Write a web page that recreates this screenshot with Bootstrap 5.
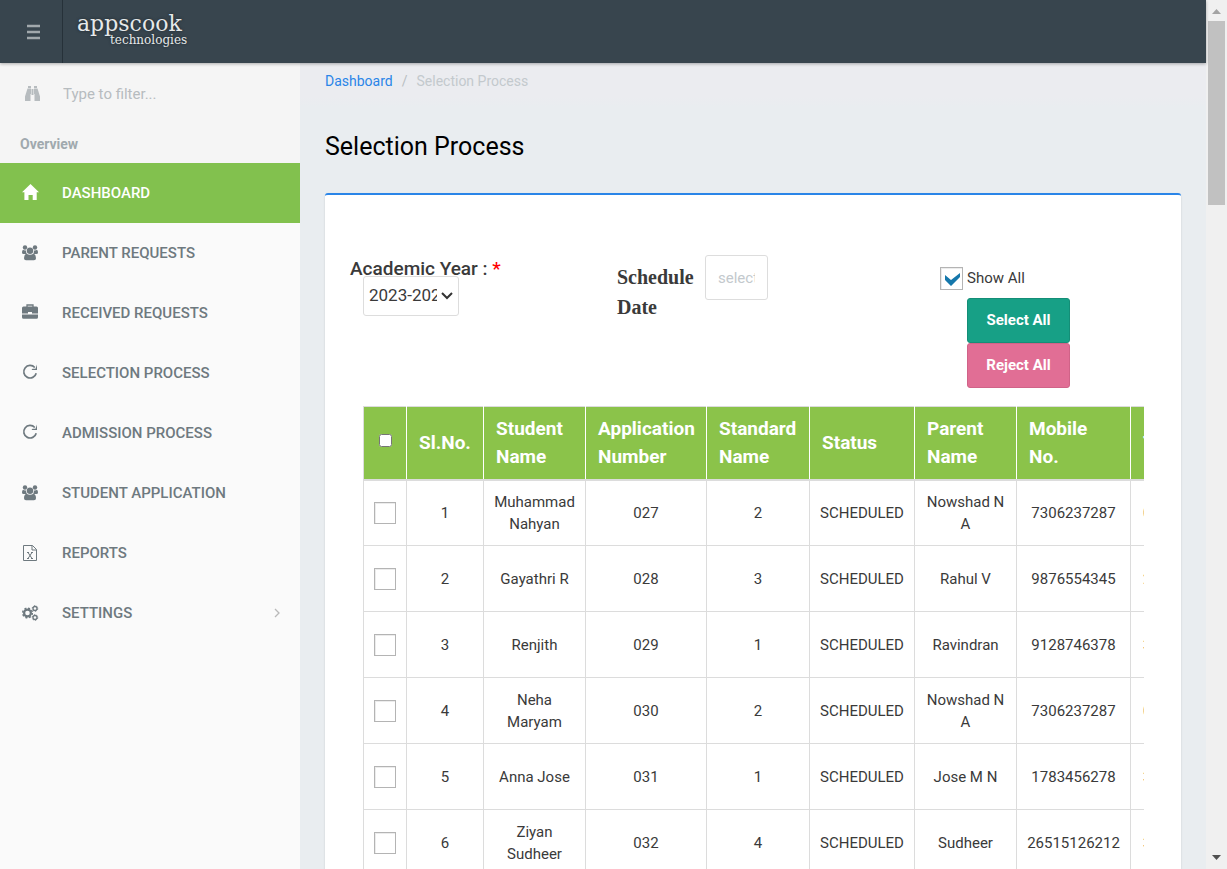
<!DOCTYPE html>
<html lang="en">
<head>
<meta charset="utf-8">
<meta name="viewport" content="width=device-width, initial-scale=1">
<title>Selection Process</title>
<link href="https://cdn.jsdelivr.net/npm/bootstrap@5.3.0/dist/css/bootstrap.min.css" rel="stylesheet">
<style>
body{font-family:Roboto,"Liberation Sans",sans-serif;font-size:15px;color:#3a3a3a;background:#e9edf0}
.topbar{height:63px;background:#38454e;box-shadow:0 1px 3px rgba(0,0,0,.3);z-index:2}
.toggle{width:63px;border:0;border-right:1px solid #263139;background:none;color:#a1a8ac}
.logo{margin-left:14px;padding-top:13px;color:#e6e9ea;font-family:"DejaVu Serif",serif;text-shadow:0 0 3px #1c252b}
.logo-main{font-size:22px;line-height:21px}
.logo-sub{font-size:12px;line-height:12px;padding-left:33px}
.side{width:300px;background:#fafafa}
.side-top{height:100px;background:#f5f5f5}
.filter-row{height:62px;padding-left:20px;color:#b7bcbf}
.filter-row input{border:0;background:none;font-size:15px;padding:0;width:200px;margin-left:19px;color:#777;outline:0}
.filter-row input::placeholder{color:#b7bcbf;opacity:1}
.overview{padding-left:20px;font-size:14px;line-height:20px;font-weight:700;color:#a0a9ae;margin-top:9px}
.side-link{height:60px;padding:0 20px;color:#6e797f;font-weight:500;text-decoration:none}
.side-link svg{width:20px;height:20px;margin-right:22px}
.side-link .chev{width:14px;height:14px;margin:0 -4px 0 auto;color:#b9b9b9}
.side-link.current{background:#82c14e;color:#fff}
.content-area{background:linear-gradient(#ebecf0 0,#ebecf0 34px,#e9edf0 44px);padding:8px 25px 0}
.crumbs{font-size:14px;line-height:20px;--bs-breadcrumb-divider-color:#b9bec2;--bs-breadcrumb-item-padding-x:9px;margin-bottom:41px}
.crumbs a{color:#2a85e8;text-decoration:none}
.crumbs .active{color:#c3c9cd}
.page-title{font-size:25px;line-height:30px;font-weight:400;color:#000;margin-bottom:31px}
.panel{background:#fff;border-top:2px solid #2a85e8;border-radius:3px;box-shadow:0 1px 2px rgba(0,0,0,.15);padding:60px 25px 25px}
.tools{display:grid;grid-template-columns:267fr 323fr 216fr}
.year-label{font-size:19px;line-height:18px;font-weight:500;display:block;margin-top:5px}
.year-select{appearance:none;width:96px;height:40px;margin-left:13px;margin-top:-2px;border:1px solid #ddd;border-radius:3px;font-size:17px;padding:0 21px 0 5px;color:#3a3a3a;display:block;background:#fff url("data:image/svg+xml,%3Csvg xmlns='http://www.w3.org/2000/svg' viewBox='0 0 12 8'%3E%3Cpath d='M1 1l5 5 5-5' fill='none' stroke='%23333' stroke-width='2'/%3E%3C/svg%3E") no-repeat right 5px center/12px 8px}
.date-label{font-family:"Liberation Serif",serif;font-weight:700;font-size:20px;line-height:30px;width:88px;padding-top:7px}
.date-input{width:63px;height:45px;border:1px solid #ddd;border-radius:3px;padding:0 12px}
.date-input::placeholder{color:#c3c9cd;opacity:1}
.tick{appearance:none;width:22px;height:22px;margin:0;border:1px solid #b4b4b4;background:#fff;box-shadow:inset 1px 1px 0 #ececec;display:block;flex:none}
.tick:checked{width:23px;height:23px;background:#fff url("data:image/svg+xml,%3Csvg xmlns='http://www.w3.org/2000/svg' viewBox='0 0 20 20'%3E%3Cpath d='M3 6v5l6 6 9-9V4l-9 7z' fill='%231577ab'/%3E%3C/svg%3E") center/20px}
.act{width:103px;height:45px;border-radius:3px;font-size:15px;font-weight:700;color:#fff;padding:0;display:block;margin-left:27px}
.act-ok{background:#17a086;border-color:#148e77}
.act-no{background:#e16e95;border-color:#d06388}
.show-all{height:43px}
.table-wrap{margin:18px 12px 0 13px;overflow:hidden}
.requests{table-layout:fixed;width:900px;margin:0;border-collapse:collapse;color:#3a3a3a;text-align:center}
.requests th,.requests td{border:1px solid #dcdcdc;vertical-align:middle}
.requests td{height:66px;padding:0 8px;line-height:22px}
.requests th{height:73px;background:#8bc34a;color:#fff;font-size:19px;line-height:28px;font-weight:700;text-align:left;padding:0 12px;border-bottom:2px solid #dcdcdc;border-left-color:#fff;border-right-color:#fff}
.requests th:nth-child(4),.requests th:nth-child(5),.requests th:nth-child(2){padding-right:0}
.requests th:first-child{padding:0;border-left-color:#dcdcdc}
.requests th:first-child input{margin:0 auto 4px}
.requests th:nth-child(8){padding-right:24px}
.requests td:last-child{text-align:left;padding-left:12px}
.requests .tick{margin:auto}
.w-a{width:43px}.w-b{width:77px}.w-c{width:102px}.w-d{width:121px}.w-e{width:103px}.w-f{width:105px}.w-g{width:114px}
.scroll-rail{width:21px;background:#f0f0f0;flex:none}
.scroll-rail i{display:block;width:17px;height:184px;background:#c1c1c1}
</style>
</head>
<body class="d-flex vh-100 overflow-hidden">
<svg width="0" height="0" class="d-none" aria-hidden="true">
<symbol id="users" viewBox="0 0 20 20"><g fill="currentColor"><circle cx="5" cy="4.500" r="2.200"/><circle cx="15" cy="4.500" r="2.200"/><circle cx="10" cy="7.800" r="3.200"/><path d="M2 9.500q0-3 1.300-2.500 1.700.8 2.800.3-.3 2.200.9 3.700H3.500Q2 11 2 9.500zM18 9.500q0-3-1.300-2.500-1.700.8-2.800.3.3 2.200-.9 3.700h3.500q1.500 0 1.500-1.500zM6.500 10.800q3.500 2 7 0 2.500.7 2.500 4.400 0 2-2 2H6q-2 0-2-2 0-3.700 2.500-4.400z"/></g></symbol>
<symbol id="redo" viewBox="0 0 20 20"><path d="M14.800 4.500A6.300 6.300 0 1 0 16.200 10.200" fill="none" stroke="currentColor" stroke-width="1.700"/><path d="M17 1.500V7h-5.500l1-1.200h3z" fill="currentColor"/></symbol>
</svg>
<div class="d-flex flex-column flex-grow-1" style="min-width:0">
<header class="topbar d-flex position-relative flex-shrink-0">
<button class="toggle d-flex align-items-center justify-content-center py-0 pe-0 ps-1" type="button" aria-label="Toggle menu"><svg width="13" height="16" viewBox="0 0 13 16"><path d="M0 2h13M0 8h13M0 14h13" stroke="currentColor" stroke-width="2.500"/></svg></button>
<div class="logo"><div class="logo-main">appscook</div><div class="logo-sub">technologies</div></div>
</header>
<div class="d-flex flex-grow-1 overflow-hidden">
<nav class="side flex-shrink-0">
<div class="side-top">
<div class="filter-row d-flex align-items-center"><svg width="24" height="20" viewBox="0 0 24 20" fill="currentColor"><path d="M8 2h3v2H8zM14 2h3v2h-3zM7.500 4.500H11V10h-.5v7H5v-4.500zM17.500 4.500H14V10h.5v7H20v-4.500zM11.500 5h2v6h-2z"/></svg><input type="text" placeholder="Type to filter..." aria-label="Type to filter"></div>
<div class="overview">Overview</div>
</div>
<a href="#" class="side-link d-flex align-items-center current"><svg viewBox="0 0 20 20"><path d="M10.500 1l8.500 8.300h-2.300V17h-4v-5H8.500v5H4.400V9.300H2z" fill="currentColor"/></svg>DASHBOARD</a>
<a href="#" class="side-link d-flex align-items-center"><svg><use href="#users"/></svg>PARENT REQUESTS</a>
<a href="#" class="side-link d-flex align-items-center"><svg viewBox="0 0 20 20"><path d="M7 4V2h6v2" fill="none" stroke="currentColor" stroke-width="1.300"/><path d="M3.500 3.500h13Q18 3.500 18 5v5.500h-6V9H8v1.500H2V5q0-1.500 1.500-1.500zM2 11.500h16v2.800q0 1.500-1.500 1.500h-13q-1.500 0-1.500-1.500z" fill="currentColor"/></svg>RECEIVED REQUESTS</a>
<a href="#" class="side-link d-flex align-items-center"><svg><use href="#redo"/></svg>SELECTION PROCESS</a>
<a href="#" class="side-link d-flex align-items-center"><svg><use href="#redo"/></svg>ADMISSION PROCESS</a>
<a href="#" class="side-link d-flex align-items-center"><svg><use href="#users"/></svg>STUDENT APPLICATION</a>
<a href="#" class="side-link d-flex align-items-center"><svg viewBox="0 0 20 20" fill="none" stroke="currentColor"><path d="M3.500 2.500h9l4 4v11h-13zM12 2.500V7h4.500"/><path d="M8 9.500l4 6M12 9.500l-4 6M7 9.500h2M11 9.500h2M7 15.500h2M11 15.500h2"/></svg>REPORTS</a>
<a href="#" class="side-link d-flex align-items-center"><svg viewBox="0 0 20 20" fill="none" stroke="currentColor"><circle cx="7.500" cy="10" r="3.400" stroke-width="2.200"/><circle cx="7.500" cy="10" r="4.800" stroke-width="1.500" stroke-dasharray="2 1.770"/><circle cx="15" cy="5.500" r="2" stroke-width="1.300"/><circle cx="15" cy="5.500" r="2.800" stroke-dasharray="1.300 1.632"/><circle cx="15" cy="14.500" r="2" stroke-width="1.300"/><circle cx="15" cy="14.500" r="2.800" stroke-dasharray="1.300 1.632"/></svg>SETTINGS<svg class="chev" viewBox="0 0 14 14"><path d="M5 3l4 4-4 4" fill="none" stroke="currentColor" stroke-width="1.300"/></svg></a>
</nav>
<main class="content-area flex-grow-1 overflow-hidden">
<nav aria-label="breadcrumb"><ol class="breadcrumb crumbs"><li class="breadcrumb-item"><a href="#">Dashboard</a></li><li class="breadcrumb-item active" aria-current="page">Selection Process</li></ol></nav>
<h1 class="page-title">Selection Process</h1>
<section class="panel">
<div class="tools">
<div><label class="year-label" for="year">Academic Year : <span class="text-danger" style="--bs-danger-rgb:255,0,0">*</span></label>
<select class="year-select" id="year"><option>2023-2024</option></select></div>
<div class="d-flex align-items-start"><label class="date-label" for="date">Schedule Date</label><input class="date-input" id="date" type="text" placeholder="select date"></div>
<div>
<div class="show-all d-flex align-items-center pt-1"><input class="tick" type="checkbox" id="all" checked><label class="ps-1" for="all">Show All</label></div>
<button class="btn act act-ok" type="button">Select All</button>
<button class="btn act act-no" type="button">Reject All</button>
</div>
</div>
<div class="table-wrap">
<table class="requests">
<colgroup><col class="w-a"><col class="w-b"><col class="w-c"><col class="w-d"><col class="w-e"><col class="w-f"><col class="w-c"><col class="w-g"><col></colgroup>
<thead><tr><th><input class="d-block" type="checkbox" aria-label="Select every row"></th><th>Sl.No.</th><th>Student Name</th><th>Application Number</th><th>Standard Name</th><th>Status</th><th>Parent Name</th><th>Mobile No.</th><th>Test Date</th></tr></thead>
<tbody>
<tr><td><input class="tick" type="checkbox" aria-label="Row 1"></td><td>1</td><td>Muhammad Nahyan</td><td>027</td><td>2</td><td>SCHEDULED</td><td>Nowshad N A</td><td>7306237287</td><td>06</td></tr>
<tr><td><input class="tick" type="checkbox" aria-label="Row 2"></td><td>2</td><td>Gayathri R</td><td>028</td><td>3</td><td>SCHEDULED</td><td>Rahul V</td><td>9876554345</td><td>23</td></tr>
<tr><td><input class="tick" type="checkbox" aria-label="Row 3"></td><td>3</td><td>Renjith</td><td>029</td><td>1</td><td>SCHEDULED</td><td>Ravindran</td><td>9128746378</td><td>30</td></tr>
<tr><td><input class="tick" type="checkbox" aria-label="Row 4"></td><td>4</td><td>Neha Maryam</td><td>030</td><td>2</td><td>SCHEDULED</td><td>Nowshad N A</td><td>7306237287</td><td>06</td></tr>
<tr><td><input class="tick" type="checkbox" aria-label="Row 5"></td><td>5</td><td>Anna Jose</td><td>031</td><td>1</td><td>SCHEDULED</td><td>Jose M N</td><td>1783456278</td><td>30</td></tr>
<tr><td><input class="tick" type="checkbox" aria-label="Row 6"></td><td>6</td><td>Ziyan Sudheer</td><td>032</td><td>4</td><td>SCHEDULED</td><td>Sudheer</td><td>26515126212</td><td>30</td></tr>
</tbody>
</table>
</div>
</section>
</main>
</div>
</div>
<div class="scroll-rail d-flex flex-column align-items-center" aria-hidden="true">
<svg width="21" height="21" viewBox="0 0 21 21"><path d="M6 14l4.500-5 4.500 5z" fill="#a3a3a3"/></svg>
<i></i>
<svg class="mt-auto" width="21" height="21" viewBox="0 0 21 21"><path d="M6 7h9l-4.500 5z" fill="#505050"/></svg>
</div>
<script src="https://cdn.jsdelivr.net/npm/bootstrap@5.3.0/dist/js/bootstrap.bundle.min.js"></script>
</body>
</html>
